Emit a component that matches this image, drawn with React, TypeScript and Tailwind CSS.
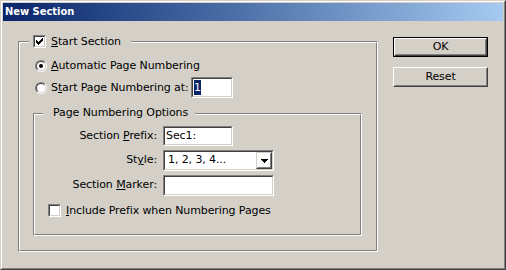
import type { ReactNode } from 'react';

function Sunken({ className, children }: { className: string; children?: ReactNode }) {
  return (
    <div
      className={`shrink-0 border border-t-[#808080] border-l-[#808080] border-r-white border-b-white ${className}`}
    >
      <div className="flex h-full w-full items-center border border-t-[#404040] border-l-[#404040] border-r-[#d4d0c8] border-b-[#d4d0c8] bg-white">
        {children}
      </div>
    </div>
  );
}

function Checkbox({ checked }: { checked?: boolean }) {
  return (
    <Sunken className="h-[13px] w-[13px]">
      {checked && (
        <svg width="9" height="9" viewBox="0 0 9 9" shapeRendering="crispEdges">
          <g fill="#000">
            <rect x="7" y="1" width="1" height="1" />
            <rect x="6" y="2" width="2" height="1" />
            <rect x="1" y="3" width="1" height="1" />
            <rect x="5" y="3" width="3" height="1" />
            <rect x="1" y="4" width="2" height="1" />
            <rect x="4" y="4" width="3" height="1" />
            <rect x="1" y="5" width="5" height="1" />
            <rect x="2" y="6" width="3" height="1" />
            <rect x="3" y="7" width="1" height="1" />
          </g>
        </svg>
      )}
    </Sunken>
  );
}

function Radio({ checked }: { checked?: boolean }) {
  return (
    <div className="h-[12px] w-[12px] shrink-0 rounded-full border border-t-[#808080] border-l-[#808080] border-r-white border-b-white">
      <div className="flex h-full w-full items-center justify-center rounded-full border border-t-[#404040] border-l-[#404040] border-r-[#d4d0c8] border-b-[#d4d0c8] bg-white">
        {checked && <div className="h-[4px] w-[4px] rounded-full bg-black" />}
      </div>
    </div>
  );
}

function Button({ label, isDefault }: { label: string; isDefault?: boolean }) {
  const bevel = (
    <div className="h-full w-full border border-t-white border-l-white border-r-[#404040] border-b-[#404040]">
      <div className="flex h-full w-full items-center justify-center border border-t-[#d4d0c8] border-l-[#d4d0c8] border-r-[#808080] border-b-[#808080]">
        {label}
      </div>
    </div>
  );
  return (
    <div className={`h-[20px] w-[95px] ${isDefault ? 'border border-black' : ''}`}>{bevel}</div>
  );
}

function GroupBox({ className, children }: { className: string; children: ReactNode }) {
  return (
    <div
      className={`relative shrink-0 border border-t-[#808080] border-l-[#808080] border-r-white border-b-white ${className}`}
    >
      <div className="h-full w-full border border-t-white border-l-white border-r-[#808080] border-b-[#808080]">
        {children}
      </div>
    </div>
  );
}

export default function App() {
  return (
    <div className="h-[270px] w-[506px] border border-t-[#d4d0c8] border-l-[#d4d0c8] border-r-[#404040] border-b-[#404040] bg-[#d4d0c8] font-['DejaVu_Sans','Liberation_Sans',sans-serif] text-[11px] tracking-[-0.1px] text-black">
      <div className="h-full w-full border border-t-white border-l-white border-r-[#808080] border-b-[#808080] p-[1px]">
        <div className="flex h-[18px] items-center bg-linear-to-r from-[#0a246a] to-[#a6caf0] pl-[2px] font-['DejaVu_Sans_Condensed','Liberation_Sans',sans-serif] text-[11px] leading-[18px] font-bold tracking-normal text-white">
          New Section
        </div>

        <div className="flex h-[246px] items-start pl-[15px]">
          <GroupBox className="mt-[20px] h-[211px] w-[360px]">
            <div className="absolute top-[-7px] left-[10px] flex h-[13px] items-center bg-[#d4d0c8] pr-[10px] pl-[4px]">
              <Checkbox checked />
              <span className="ml-[5px] leading-[13px] whitespace-nowrap">
                <u>S</u>tart Section
              </span>
            </div>

            <div className="mt-[17px] ml-[15px] flex h-[12px] items-center">
              <Radio checked />
              <span className="ml-[4px] leading-[12px] whitespace-nowrap">
                <u>A</u>utomatic Page Numbering
              </span>
            </div>

            <div className="mt-[5px] ml-[15px] flex h-[21px] items-center">
              <Radio />
              <span className="ml-[4px] w-[140px] leading-[12px] whitespace-nowrap">
                S<u>t</u>art Page Numbering at:
              </span>
              <Sunken className="h-[21px] w-[42px]">
                <span className="ml-[1px] bg-[#0a246a] leading-[15px] text-white">1</span>
              </Sunken>
            </div>

            <GroupBox className="mt-[15px] ml-[13px] h-[123px] w-[329px]">
              <div className="absolute top-[-8px] left-[9px] bg-[#d4d0c8] pr-[7px] pl-[10px] leading-[13px] whitespace-nowrap">
                Page Numbering Options
              </div>

              <div className="mt-[11px] flex h-[20px] items-center">
                <span className="w-[122px] text-right whitespace-nowrap">
                  Section <u>P</u>refix:
                </span>
                <Sunken className="ml-[6px] h-[20px] w-[70px]">
                  <span className="ml-[1px]">Sec1:</span>
                </Sunken>
              </div>

              <div className="mt-[4px] flex h-[21px] items-center">
                <span className="w-[122px] text-right whitespace-nowrap">
                  St<u>y</u>le:
                </span>
                <Sunken className="ml-[6px] h-[21px] w-[111px]">
                  <span className="ml-[3px]">1, 2, 3, 4...</span>
                  <div className="ml-auto h-full w-[16px] border border-t-[#d4d0c8] border-l-[#d4d0c8] border-r-[#404040] border-b-[#404040]">
                    <div className="flex h-full w-full items-center justify-center border border-t-white border-l-white border-r-[#808080] border-b-[#808080]">
                      <svg width="7" height="4" viewBox="0 0 7 4" shapeRendering="crispEdges">
                        <path d="M0 0h7v1H0zM1 1h5v1H1zM2 2h3v1H2zM3 3h1v1H3z" fill="#000" />
                      </svg>
                    </div>
                  </div>
                </Sunken>
              </div>

              <div className="mt-[4px] flex h-[21px] items-center">
                <span className="w-[122px] text-right whitespace-nowrap">
                  Section <u>M</u>arker:
                </span>
                <Sunken className="ml-[6px] h-[21px] w-[111px]" />
              </div>

              <div className="mt-[8px] ml-[13px] flex h-[13px] items-center">
                <Checkbox />
                <span className="ml-[5px] leading-[13px] whitespace-nowrap">
                  <u>I</u>nclude Prefix when Numbering Pages
                </span>
              </div>
            </GroupBox>
          </GroupBox>

          <div className="mt-[16px] ml-[15px] flex flex-col gap-[10px]">
            <Button label="OK" isDefault />
            <Button label="Reset" />
          </div>
        </div>
      </div>
    </div>
  );
}
